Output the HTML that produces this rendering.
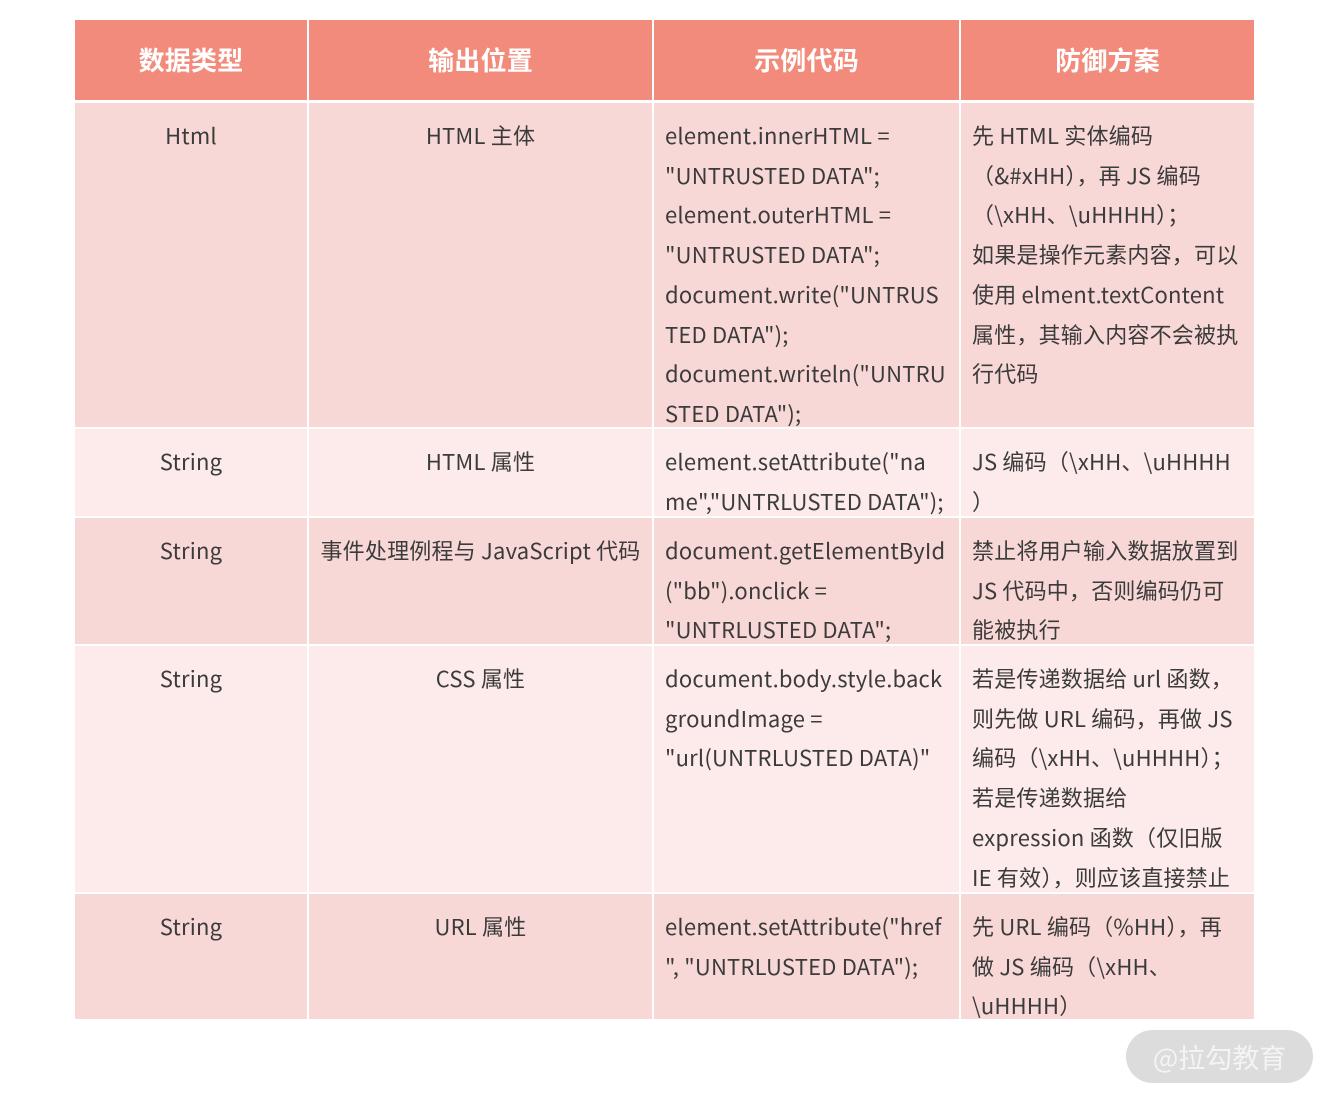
<!DOCTYPE html>
<html><head><meta charset="utf-8"><style>
body{margin:0;width:1331px;height:1100px;background:#fff;position:relative;overflow:hidden;font-family:"Noto Sans CJK SC","Liberation Sans",sans-serif;}
.c{position:absolute;box-sizing:border-box;font-size:22px;line-height:39.7px;color:#3b3b3b;padding:13px 11px 0 11px;white-space:nowrap;overflow:hidden;letter-spacing:0.2px;}
.h{background:#f28b7b;color:#fff;font-weight:bold;font-size:26px;text-align:center;padding:0;line-height:80px;}
.a{background:#f8d8d6}.b{background:#fcebea}
.ct{text-align:center}
.wm{position:absolute;left:1126px;top:1030px;width:187px;height:53px;border-radius:27px;background:#dcdcdc;color:#f4f4f4;font-size:27px;line-height:53px;text-align:center;}
</style></head><body>
<div class="c h" style="left:75px;top:20px;width:232px;height:80px">数据类型</div>
<div class="c h" style="left:309px;top:20px;width:343px;height:80px">输出位置</div>
<div class="c h" style="left:654px;top:20px;width:305px;height:80px">示例代码</div>
<div class="c h" style="left:961px;top:20px;width:293px;height:80px">防御方案</div>

<div class="c a ct" style="left:75px;top:103px;width:232px;height:324px">Html</div>
<div class="c a ct" style="left:309px;top:103px;width:343px;height:324px">HTML 主体</div>
<div class="c a" style="left:654px;top:103px;width:305px;height:324px">element.innerHTML =<br>"UNTRUSTED DATA";<br>element.outerHTML =<br>"UNTRUSTED DATA";<br>document.write("UNTRUS<br>TED DATA");<br>document.writeln("UNTRU<br>STED DATA");</div>
<div class="c a" style="left:961px;top:103px;width:293px;height:324px">先 HTML 实体编码<br>（&amp;#xHH），再 JS 编码<br>（\xHH、\uHHHH）；<br>如果是操作元素内容，可以<br>使用 elment.textContent<br>属性，其输入内容不会被执<br>行代码</div>

<div class="c b ct" style="left:75px;top:429px;width:232px;height:87px">String</div>
<div class="c b ct" style="left:309px;top:429px;width:343px;height:87px">HTML 属性</div>
<div class="c b" style="left:654px;top:429px;width:305px;height:87px">element.setAttribute("na<br>me","UNTRLUSTED DATA");</div>
<div class="c b" style="left:961px;top:429px;width:293px;height:87px">JS 编码（\xHH、\uHHHH<br>）</div>

<div class="c a ct" style="left:75px;top:518px;width:232px;height:126px">String</div>
<div class="c a ct" style="left:309px;top:518px;width:343px;height:126px;padding-left:2px;padding-right:2px">事件处理例程与 JavaScript 代码</div>
<div class="c a" style="left:654px;top:518px;width:305px;height:126px">document.getElementById<br>("bb").onclick =<br>"UNTRLUSTED DATA";</div>
<div class="c a" style="left:961px;top:518px;width:293px;height:126px">禁止将用户输入数据放置到<br>JS 代码中，否则编码仍可<br>能被执行</div>

<div class="c b ct" style="left:75px;top:646px;width:232px;height:246px">String</div>
<div class="c b ct" style="left:309px;top:646px;width:343px;height:246px">CSS 属性</div>
<div class="c b" style="left:654px;top:646px;width:305px;height:246px">document.body.style.back<br>groundImage =<br>"url(UNTRLUSTED DATA)"</div>
<div class="c b" style="left:961px;top:646px;width:293px;height:246px">若是传递数据给 url 函数，<br>则先做 URL 编码，再做 JS<br>编码（\xHH、\uHHHH）；<br>若是传递数据给<br>expression 函数（仅旧版<br>IE 有效），则应该直接禁止</div>

<div class="c a ct" style="left:75px;top:894px;width:232px;height:125px">String</div>
<div class="c a ct" style="left:309px;top:894px;width:343px;height:125px">URL 属性</div>
<div class="c a" style="left:654px;top:894px;width:305px;height:125px">element.setAttribute("href<br>", "UNTRLUSTED DATA");</div>
<div class="c a" style="left:961px;top:894px;width:293px;height:125px">先 URL 编码（%HH），再<br>做 JS 编码（\xHH、<br>\uHHHH）</div>

<div class="wm">@拉勾教育</div>
</body></html>
